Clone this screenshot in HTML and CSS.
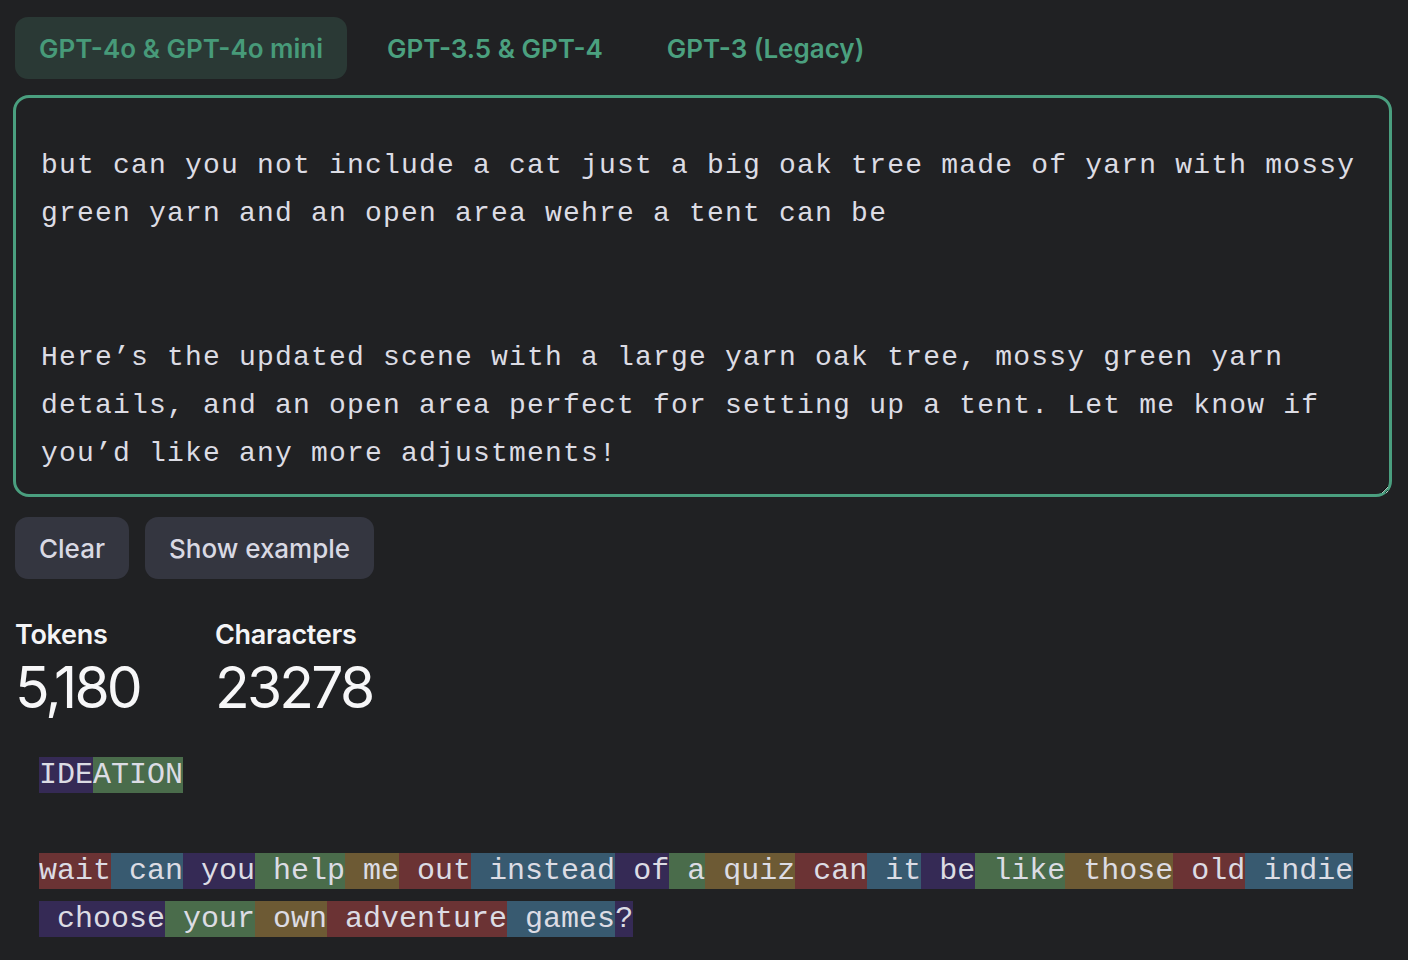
FILE: index.html
```html
<!DOCTYPE html>
<html lang="en">
<head>
<meta charset="utf-8">
<title>Tokenizer</title>
<link rel="stylesheet" href="styles.css">
</head>
<body>
<main class="page">
  <nav class="tabs">
    <button class="tab tab-active">GPT-4o &amp; GPT-4o mini</button>
    <button class="tab">GPT-3.5 &amp; GPT-4</button>
    <button class="tab">GPT-3 (Legacy)</button>
  </nav>
  <textarea class="input" id="input" spellcheck="false">but can you not include a cat just a big oak tree made of yarn with mossy green yarn and an open area wehre a tent can be


Here’s the updated scene with a large yarn oak tree, mossy green yarn details, and an open area perfect for setting up a tent. Let me know if you’d like any more adjustments!</textarea>
  <div class="actions">
    <button class="btn">Clear</button>
    <button class="btn">Show example</button>
  </div>
  <section class="stats">
    <div class="stat stat-tokens">
      <div class="stat-label">Tokens</div>
      <div class="stat-value">5,180</div>
    </div>
    <div class="stat">
      <div class="stat-label">Characters</div>
      <div class="stat-value">23278</div>
    </div>
  </section>
  <section class="tokens"><span class="tk t-purple">IDE</span><span class="tk t-green">ATION</span><br><br><span class="tk t-red">wait</span><span class="tk t-blue"> can</span><span class="tk t-purple"> you</span><span class="tk t-green"> help</span><span class="tk t-brown"> me</span><span class="tk t-red"> out</span><span class="tk t-blue"> instead</span><span class="tk t-purple"> of</span><span class="tk t-green"> a</span><span class="tk t-brown"> quiz</span><span class="tk t-red"> can</span><span class="tk t-blue"> it</span><span class="tk t-purple"> be</span><span class="tk t-green"> like</span><span class="tk t-brown"> those</span><span class="tk t-red"> old</span><span class="tk t-blue"> indie</span><br><span class="tk t-purple"> choose</span><span class="tk t-green"> your</span><span class="tk t-brown"> own</span><span class="tk t-red"> adventure</span><span class="tk t-blue"> games</span><span class="tk t-purple">?</span></section>
</main>
<script>
  var ta = document.getElementById('input');
  ta.focus();
  ta.setSelectionRange(ta.value.length, ta.value.length);
</script>
</body>
</html>
```

FILE: styles.css
```css
html, body {
  margin: 0;
  padding: 0;
  background: #202123;
}

body {
  font-family: Inter, "Noto Sans", sans-serif;
  color: #ececf1;
}

.page {
  padding: 17px 18px 0 15px;
  display: flex;
  flex-direction: column;
}

.tabs {
  display: flex;
  gap: 16px;
  height: 62px;
}

.tab {
  border: 0;
  background: transparent;
  color: #4ba07f;
  font-family: Inter, "Noto Sans", sans-serif;
  font-weight: 600;
  font-size: 26px;
  letter-spacing: 0;
  padding: 0 24px;
  border-radius: 13px;
  height: 62px;
  cursor: pointer;
}

.tab-active {
  background: #2a3935;
  color: #479a79;
}

.input {
  display: block;
  margin: 16px -2px 0;
  height: 402px;
  box-sizing: border-box;
  border: 3px solid #4a9f7f;
  border-radius: 16px;
  background: #202123;
  color: #dcdce4;
  font-family: "Liberation Mono", "DejaVu Sans Mono", monospace;
  font-size: 28px;
  letter-spacing: 1.2px;
  line-height: 48px;
  padding: 44px 25px 16px 25px;
  resize: vertical;
  overflow: hidden;
  outline: none;
  caret-color: #ececf1;
}

.actions {
  display: flex;
  gap: 16px;
  margin-top: 20px;
}

.btn {
  border: 0;
  background: #343640;
  color: #d9d9e3;
  font-family: Inter, "Noto Sans", sans-serif;
  font-weight: 500;
  font-size: 26px;
  letter-spacing: 0;
  height: 62px;
  padding: 0 24px;
  border-radius: 13px;
}

.stats {
  display: flex;
  margin-top: 38px;
}

.stat-tokens {
  width: 200px;
}

.stat-label {
  font-weight: 600;
  font-size: 27px;
  letter-spacing: -0.3px;
  line-height: 36px;
  color: #f4f4f6;
}

.stat-value {
  font-weight: 400;
  font-size: 57px;
  letter-spacing: -2.8px;
  line-height: 70px;
  color: #f7f7f8;
}

.tokens {
  margin-top: 28px;
  padding-left: 24px;
  font-family: "Liberation Mono", "DejaVu Sans Mono", monospace;
  font-size: 30px;
  line-height: 48px;
  color: #dcdce4;
  white-space: pre;
}

.tk {
  display: inline-block;
  line-height: 36px;
  white-space: pre;
}

.t-purple { background: #352a55; }
.t-green  { background: #4a6c4b; }
.t-brown  { background: #6d5a34; }
.t-red    { background: #6b3334; }
.t-blue   { background: #385a70; }
```
